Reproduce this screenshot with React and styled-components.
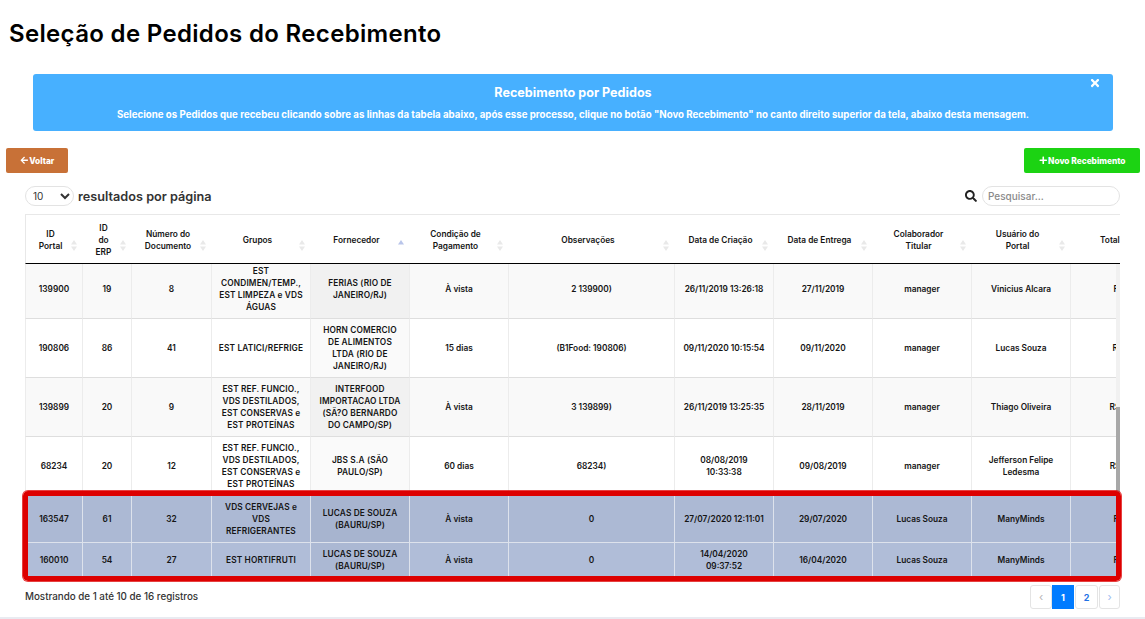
import React from 'react';
import styled, { createGlobalStyle } from 'styled-components';
import { FaArrowLeft, FaPlus, FaSearch, FaTimes } from 'react-icons/fa';

const GlobalStyle = createGlobalStyle`
    html, body {
        margin: 0;
        padding: 0;
        background: #e9ebf1;
    }
    * {
        box-sizing: border-box;
    }
`;

const Page = styled.div`
    width: 1145px;
    height: 617px;
    background: #fff;
    font-family: 'Inter', 'Noto Sans', sans-serif;
    color: #111;
    overflow: hidden;
`;
const Title = styled.h1`
    margin: 0;
    padding: 19px 0 0 9px;
    height: 74px;
    font-size: 24px;
    line-height: 29px;
    font-weight: 600;
    letter-spacing: 0.33px;
    color: #000;
`;
const Alert = styled.div`
    position: relative;
    margin: 0 32px 0 33px;
    height: 57px;
    padding-top: 11px;
    background: #47b0ff;
    border-radius: 3px;
    color: #fff;
    text-align: center;
    font-weight: 700;
`;
const AlertTitle = styled.div`
    font-size: 12.6px;
    line-height: 15px;
`;
const AlertText = styled.div`
    margin-top: 8px;
    font-size: 9.7px;
    line-height: 13px;
`;
const Close = styled.span`
    position: absolute;
    top: 3px;
    right: 12px;
    font-size: 12px;
    line-height: 12px;
`;
const Actions = styled.div`
    display: flex;
    justify-content: space-between;
    padding: 17px 5px 0 6px;
`;
const ActionButton = styled.button`
    display: flex;
    align-items: center;
    justify-content: center;
    gap: 1px;
    width: ${props => props.$width}px;
    height: 25px;
    padding: 0;
    border: none;
    border-radius: 2px;
    background: ${props => props.$color};
    color: #fff;
    font-family: inherit;
    font-size: 8.3px;
    font-weight: 800;
    svg {
        font-size: 8.5px;
    }
`;
const Tools = styled.div`
    display: flex;
    justify-content: space-between;
    align-items: center;
    height: 20px;
    margin: 13px 25px 0 25px;
`;
const PerPage = styled.label`
    display: flex;
    align-items: center;
    gap: 4px;
    font-size: 12.7px;
    font-weight: 600;
    color: #333;
`;
const Select = styled.select`
    width: 49px;
    height: 20px;
    padding: 0 0 0 3px;
    border: 1px solid #e3e3e3;
    border-radius: 10px;
    background: #fff;
    font-family: inherit;
    font-size: 10px;
    color: #333;
    outline: none;
`;
const Search = styled.div`
    display: flex;
    align-items: center;
    gap: 5px;
    svg {
        font-size: 12px;
        color: #222;
    }
`;
const SearchInput = styled.input`
    width: 138px;
    height: 20px;
    padding: 0 5px;
    border: 1px solid #e3e3e3;
    border-radius: 10px;
    font-family: inherit;
    font-size: 10px;
    font-weight: 500;
    outline: none;
    &::placeholder {
        color: #8a8a8a;
    }
`;
const TableArea = styled.div`
    position: relative;
    height: 363px;
    margin: 8px 25px 0 25px;
    border-top: 1px solid #e8e8e8;
`;
const Clip = styled.div`
    width: 100%;
    height: 100%;
    overflow: hidden;
`;
const Table = styled.table`
    table-layout: fixed;
    width: 1174px;
    border-collapse: separate;
    border-spacing: 0;
    font-size: 8.3px;
    line-height: 12px;
    font-weight: 600;
    color: #151515;
    text-align: center;
`;
const Th = styled.th`
    position: relative;
    height: 49px;
    padding: 1px 13px 0 5px;
    font-weight: 600;
    font-size: 8.3px;
    border-bottom: 1px solid #000;
    white-space: pre;
    &:first-child {
        border-left: 1px solid #e8e8e8;
    }
`;
const SortIcon = styled.svg`
    position: absolute;
    right: 6px;
    top: 25px;
    width: 6px;
    height: 11px;
`;
const Td = styled.td`
    padding: 5px 3px;
    white-space: pre;
    letter-spacing: ${props => (props.$caps ? '0.15px' : '0')};
    border-right: 1px solid ${props => (props.$selected ? '#dde2ec' : '#ececec')};
    border-bottom: 1px solid ${props => (props.$selected ? '#dde2ec' : '#dedede')};
    background: ${props => props.$bg};
    &:first-child {
        border-left: 1px solid #ececec;
    }
`;
const Row = styled.tr`
    height: ${props => props.$height}px;
    &:first-child td {
        padding-top: 1px;
    }
`;
const Track = styled.div`
    position: absolute;
    top: 49px;
    right: 0;
    width: 4px;
    bottom: 0;
    background: #f1f1f1;
`;
const Thumb = styled.div`
    position: absolute;
    top: 143px;
    left: 0;
    right: 0;
    bottom: 0;
    background: #a8a8a8;
`;
const Highlight = styled.div`
    position: absolute;
    top: 276px;
    left: -2px;
    right: -1px;
    height: 90px;
    border: 5px solid #dd0000;
    border-radius: 5px;
    box-shadow: 0 0 0 1px rgba(221, 0, 0, 0.75);
`;
const Footer = styled.div`
    display: flex;
    justify-content: space-between;
    margin: 8px 25px 0 25px;
`;
const Info = styled.div`
    padding-top: 6px;
    font-size: 9.8px;
    line-height: 12px;
    font-weight: 500;
    color: #333;
`;
const Pagination = styled.div`
    display: flex;
    height: 24px;
`;
const PageItem = styled.div`
    display: flex;
    align-items: center;
    justify-content: center;
    width: ${props => props.$width}px;
    margin-left: ${props => props.$gap || 0}px;
    border: ${props => (props.$active ? '0' : '1px solid #e4e4e4')};
    border-radius: ${props => (props.$active ? '0' : '3px')};
    background: ${props => (props.$active ? '#007bff' : '#fff')};
    color: ${props => {
        if (props.$active) return '#fff';
        return props.$color || '#1f72e6';
    }};
    font-size: ${props => (props.$arrow ? '11px' : '9px')};
    font-weight: ${props => (props.$arrow ? '400' : '700')};
`;

const columns = [
    { w: 58, label: 'ID\nPortal' },
    { w: 49, label: 'ID\ndo\nERP' },
    { w: 80, label: 'Número do\nDocumento' },
    { w: 99, label: 'Grupos' },
    { w: 99, label: 'Fornecedor', sorted: true },
    { w: 99, label: 'Condição de\nPagamento' },
    { w: 166, label: 'Observações' },
    { w: 99, label: 'Data de Criação' },
    { w: 99, label: 'Data de Entrega' },
    { w: 99, label: 'Colaborador\nTitular' },
    { w: 99, label: 'Usuário do\nPortal' },
    { w: 128, label: 'Total do Pedido' },
];

const rows = [
    {
        h: 55,
        cells: ['139900', '19', '8', 'EST\nCONDIMEN/TEMP.,\nEST LIMPEZA e VDS\nÁGUAS', 'FERIAS (RIO DE\nJANEIRO/RJ)', 'À vista', '2 139900)', '26/11/2019 13:26:18', '27/11/2019', 'manager', 'Vinicius Alcara', 'R$ 950,00'],
    },
    {
        h: 59,
        cells: ['190806', '86', '41', 'EST LATICI/REFRIGE', 'HORN COMERCIO\nDE ALIMENTOS\nLTDA (RIO DE\nJANEIRO/RJ)', '15 dias', '(B1Food: 190806)', '09/11/2020 10:15:54', '09/11/2020', 'manager', 'Lucas Souza', 'R$ 1.151,50'],
    },
    {
        h: 59,
        cells: ['139899', '20', '9', 'EST REF. FUNCIO.,\nVDS DESTILADOS,\nEST CONSERVAS e\nEST PROTEÍNAS', 'INTERFOOD\nIMPORTACAO LTDA\n(SÃ?O BERNARDO\nDO CAMPO/SP)', 'À vista', '3 139899)', '26/11/2019 13:25:35', '28/11/2019', 'manager', 'Thiago Oliveira', 'R$ 2.545,00'],
    },
    {
        h: 59,
        cells: ['68234', '20', '12', 'EST REF. FUNCIO.,\nVDS DESTILADOS,\nEST CONSERVAS e\nEST PROTEÍNAS', 'JBS S.A (SÃO\nPAULO/SP)', '60 dias', '68234)', '08/08/2019\n10:33:38', '09/08/2019', 'manager', 'Jefferson Felipe\nLedesma', 'R$ 2.345,00'],
    },
    {
        h: 47,
        selected: true,
        cells: ['163547', '61', '32', 'VDS CERVEJAS e\nVDS\nREFRIGERANTES', 'LUCAS DE SOUZA\n(BAURU/SP)', 'À vista', '0', '27/07/2020 12:11:01', '29/07/2020', 'Lucas Souza', 'ManyMinds', 'R$ 950,00'],
    },
    {
        h: 35,
        selected: true,
        cells: ['160010', '54', '27', 'EST HORTIFRUTI', 'LUCAS DE SOUZA\n(BAURU/SP)', 'À vista', '0', '14/04/2020\n09:37:52', '16/04/2020', 'Lucas Souza', 'ManyMinds', 'R$ 950,00'],
    },
];

// zebra + the darker sorted column, selected rows go blue
const cellColor = (rowIndex, colIndex, selected) => {
    const odd = rowIndex % 2 === 0;
    const sorted = colIndex === 4;
    if (selected) {
        if (odd) return sorted ? '#a7b4cf' : '#acb9d4';
        return sorted ? '#abb8d3' : '#b0bdd8';
    }
    if (odd) return sorted ? '#f1f1f1' : '#f9f9f9';
    return sorted ? '#fafafa' : '#fff';
};

const SortArrows = ({ active }) => (
    <SortIcon viewBox='0 0 6 11'>
        <polygon points='3,0 6,4.5 0,4.5' fill={active ? '#b9c5ea' : '#e9e9e9'} />
        {!active && <polygon points='3,11 6,6.5 0,6.5' fill='#e9e9e9' />}
    </SortIcon>
);

const App = () => (
    <Page>
        <GlobalStyle />
        <Title>Seleção de Pedidos do Recebimento</Title>
        <Alert>
            <Close>
                <FaTimes />
            </Close>
            <AlertTitle>Recebimento por Pedidos</AlertTitle>
            <AlertText>
                Selecione os Pedidos que recebeu clicando sobre as linhas da tabela abaixo, após esse processo, clique no botão "Novo Recebimento" no canto direito superior da tela, abaixo desta mensagem.
            </AlertText>
        </Alert>
        <Actions>
            <ActionButton $width={62} $color='#c87137'>
                <FaArrowLeft /> Voltar
            </ActionButton>
            <ActionButton $width={116} $color='#1cd313'>
                <FaPlus /> Novo Recebimento
            </ActionButton>
        </Actions>
        <Tools>
            <PerPage>
                <Select defaultValue='10'>
                    <option value='10'>10</option>
                    <option value='25'>25</option>
                </Select>
                resultados por página
            </PerPage>
            <Search>
                <FaSearch />
                <SearchInput placeholder='Pesquisar...' />
            </Search>
        </Tools>
        <TableArea>
            <Clip>
                <Table>
                    <colgroup>
                        {columns.map(col => (
                            <col key={col.label} width={col.w} />
                        ))}
                    </colgroup>
                    <thead>
                        <tr>
                            {columns.map(col => (
                                <Th key={col.label}>
                                    {col.label}
                                    {col.label !== 'Total do Pedido' && <SortArrows active={col.sorted} />}
                                </Th>
                            ))}
                        </tr>
                    </thead>
                    <tbody>
                        {rows.map((row, r) => (
                            <Row key={row.cells[0]} $height={row.h}>
                                {row.cells.map((cell, c) => (
                                    <Td
                                        key={c}
                                        $selected={row.selected}
                                        $caps={c === 3 || c === 4}
                                        $bg={cellColor(r, c, row.selected)}
                                    >
                                        {cell}
                                    </Td>
                                ))}
                            </Row>
                        ))}
                    </tbody>
                </Table>
            </Clip>
            <Track>
                <Thumb />
            </Track>
            <Highlight />
        </TableArea>
        <Footer>
            <Info>Mostrando de 1 até 10 de 16 registros</Info>
            <Pagination>
                <PageItem $width={22} $arrow $color='#b5b5b5'>‹</PageItem>
                <PageItem $width={22} $active>1</PageItem>
                <PageItem $width={23} $gap={1}>2</PageItem>
                <PageItem $width={21} $gap={1} $arrow $color='#9dbcf0'>›</PageItem>
            </Pagination>
        </Footer>
    </Page>
);

export default App;
